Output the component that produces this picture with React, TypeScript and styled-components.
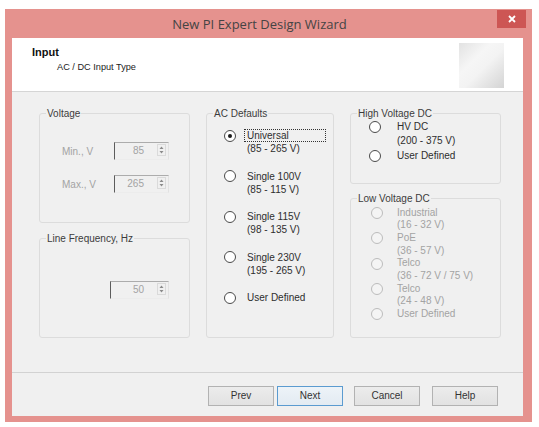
import React from "react";
import styled, { createGlobalStyle } from "styled-components";

const GlobalStyle = createGlobalStyle`
  html, body {
    margin: 0;
    padding: 0;
    background: #ffffff;
  }
  body {
    font-family: "Liberation Sans", Arial, sans-serif;
  }
`;

const Page = styled.div`
  width: 539px;
  height: 427px;
  padding: 9px 0 0 5px;
  box-sizing: border-box;
`;

const Window = styled.div`
  width: 527px;
  height: 413px;
  box-sizing: border-box;
  background: #e5928e;
  padding: 0 9px 6px 7px;
  display: flex;
  flex-direction: column;
`;

const TitleBar = styled.div`
  height: 29px;
  display: flex;
  align-items: flex-start;
  flex-shrink: 0;
`;

const Title = styled.div`
  flex: 1;
  padding-left: 10px;
  text-align: center;
  font-family: "Open Sans", "Noto Sans", sans-serif;
  font-size: 13px;
  line-height: 30px;
  color: #444;
`;

const CloseButton = styled.div`
  width: 29px;
  height: 18px;
  margin: 1px -3px 0 0;
  background: #cd5654;
  display: flex;
  align-items: center;
  justify-content: center;
`;

const Client = styled.div`
  flex: 1;
  background: #f0f0f0;
  display: flex;
  flex-direction: column;
`;

const Header = styled.div`
  height: 53px;
  background: #ffffff;
  border-bottom: 1px solid #d5d5d5;
  display: flex;
  justify-content: space-between;
  padding: 0 19px 0 20px;
  flex-shrink: 0;
`;

const HeaderText = styled.div`
  padding-top: 8px;
`;

const HeaderTitle = styled.div`
  font-weight: bold;
  font-size: 11px;
  line-height: 13px;
  color: #111;
`;

const HeaderSub = styled.div`
  font-size: 9.2px;
  line-height: 13px;
  margin-top: 2px;
  padding-left: 25px;
  color: #222;
`;

const HeaderIcon = styled.div`
  width: 45px;
  height: 45px;
  margin-top: 5px;
  background: linear-gradient(135deg, #e2e2e2 0%, #f6f6f6 35%, #f3f3f3 55%, #d4d4d4 100%);
`;

const Body = styled.div`
  height: 280px;
  box-sizing: border-box;
  padding: 21px 0 0 27px;
  display: flex;
  gap: 16px;
  flex-shrink: 0;
`;

const Column = styled.div<{ $width: number; $gap: number }>`
  width: ${(p) => p.$width}px;
  display: flex;
  flex-direction: column;
  gap: ${(p) => p.$gap}px;
`;

const Group = styled.div<{ $height: number }>`
  height: ${(p) => p.$height}px;
  box-sizing: border-box;
  border: 1px solid #dcdcdc;
  border-radius: 3px;
`;

const Caption = styled.div`
  width: fit-content;
  margin: -7px 0 0 6px;
  padding: 0 1px;
  background: #f0f0f0;
  font-size: 10px;
  line-height: 13px;
  color: #3c3c3c;
`;

const FieldGrid = styled.div`
  margin-top: 22px;
  padding-left: 22px;
  display: grid;
  grid-template-columns: 52px 55px;
  grid-auto-rows: 18px;
  row-gap: 15px;
  align-items: center;
`;

const FieldLabel = styled.div`
  font-size: 10px;
  color: #a3a3a3;
`;

const SpinBox = styled.div<{ $width?: number; $offset?: number; $top?: number }>`
  width: ${(p) => p.$width ?? 55}px;
  height: 18px;
  box-sizing: border-box;
  margin-left: ${(p) => p.$offset ?? 0}px;
  margin-top: ${(p) => p.$top ?? 0}px;
  display: flex;
  background: #f0f0f0;
  border-top: 1px solid #acacac;
  border-left: 1px solid #5c5c5c;
  border-right: 1px solid #e2e2e2;
  border-bottom: 1px solid #ececec;
`;

const SpinValue = styled.div`
  flex: 1;
  text-align: right;
  font-size: 10px;
  line-height: 16px;
  color: #a3a3a3;
`;

const SpinArrows = styled.div`
  width: 9px;
  height: 12px;
  box-sizing: border-box;
  margin: 1px 2px 0 13px;
  border: 1px solid #dadada;
  display: flex;
  align-items: center;
  justify-content: center;
`;

const RadioList = styled.div<{ $top: number; $left: number; $gap: number }>`
  margin-top: ${(p) => p.$top}px;
  padding-left: ${(p) => p.$left}px;
  display: flex;
  flex-direction: column;
  gap: ${(p) => p.$gap}px;
`;

const RadioItem = styled.div<{ $gap: number; $line: number; $dim?: boolean }>`
  display: flex;
  align-items: flex-start;
  gap: ${(p) => p.$gap}px;
  font-size: 10px;
  line-height: ${(p) => p.$line}px;
  color: ${(p) => (p.$dim ? "#a3a3a3" : "#2e2e2e")};
`;

const RadioCircle = styled.span<{ $checked?: boolean; $dim?: boolean; $line: number }>`
  flex-shrink: 0;
  width: 12px;
  height: 12px;
  box-sizing: border-box;
  margin-top: ${(p) => (p.$line - 12) / 2}px;
  border-radius: 50%;
  border: 1px solid ${(p) => (p.$dim ? "#bcbcbc" : "#4a4a4a")};
  background: ${(p) => (p.$dim ? "#f4f4f4" : "#ffffff")};
  display: flex;
  align-items: center;
  justify-content: center;

  &::after {
    content: "";
    display: ${(p) => (p.$checked ? "block" : "none")};
    width: 4px;
    height: 4px;
    border-radius: 50%;
    background: #1a1a1a;
  }
`;

const Focused = styled.span`
  display: block;
  width: 82px;
  height: 13px;
  box-sizing: border-box;
  margin-left: -3px;
  padding-left: 2px;
  border: 1px dotted #333;
  line-height: 11px;
`;

const Footer = styled.div`
  flex: 1;
  border-top: 1px solid #d2d2d2;
  display: flex;
  justify-content: flex-end;
  align-items: flex-start;
  padding: 13px 25px 0 0;
`;

const Button = styled.div<{ $primary?: boolean; $space: number }>`
  width: 66px;
  height: 20px;
  box-sizing: border-box;
  margin-left: ${(p) => p.$space}px;
  border: 1px solid ${(p) => (p.$primary ? "#5b9bd0" : "#b2b2b2")};
  background: ${(p) =>
    p.$primary ? "linear-gradient(#edf3f8, #e3ebf2)" : "linear-gradient(#ececec, #e2e2e2)"};
  font-size: 10px;
  line-height: 18px;
  text-align: center;
  color: #333;
`;

type Option = { label: string; range?: string; checked?: boolean };

const acOptions: Option[] = [
  { label: "Universal", range: "(85 - 265 V)", checked: true },
  { label: "Single 100V", range: "(85 - 115 V)" },
  { label: "Single 115V", range: "(98 - 135 V)" },
  { label: "Single 230V", range: "(195 - 265 V)" },
  { label: "User Defined" },
];

const hvOptions: Option[] = [
  { label: "HV DC", range: "(200 - 375 V)" },
  { label: "User Defined" },
];

const lvOptions: Option[] = [
  { label: "Industrial", range: "(16 - 32 V)" },
  { label: "PoE", range: "(36 - 57 V)" },
  { label: "Telco", range: "(36 - 72 V / 75 V)" },
  { label: "Telco", range: "(24 - 48 V)" },
  { label: "User Defined" },
];

const Arrows = () => (
  <svg width="5" height="8" viewBox="0 0 5 8">
    <path d="M2.5 0.5 L4.5 3 L0.5 3 Z" fill="#8a8a8a" />
    <path d="M0.5 5 L4.5 5 L2.5 7.5 Z" fill="#8a8a8a" />
  </svg>
);

const Spin = ({ value, width, offset, top }: { value: string; width?: number; offset?: number; top?: number }) => (
  <SpinBox $width={width} $offset={offset} $top={top}>
    <SpinValue>{value}</SpinValue>
    <SpinArrows>
      <Arrows />
    </SpinArrows>
  </SpinBox>
);

const Radios = ({
  options,
  top,
  left,
  gap,
  textGap,
  line,
  dim,
  focusFirst,
}: {
  options: Option[];
  top: number;
  left: number;
  gap: number;
  textGap: number;
  line: number;
  dim?: boolean;
  focusFirst?: boolean;
}) => (
  <RadioList $top={top} $left={left} $gap={gap}>
    {options.map((o, i) => (
      <RadioItem key={i} $gap={textGap} $line={line} $dim={dim}>
        <RadioCircle $checked={o.checked} $dim={dim} $line={line} />
        <div>
          {focusFirst && i === 0 ? <Focused>{o.label}</Focused> : <div>{o.label}</div>}
          {o.range && <div>{o.range}</div>}
        </div>
      </RadioItem>
    ))}
  </RadioList>
);

export default function App() {
  return (
    <>
      <GlobalStyle />
      <Page>
        <Window>
          <TitleBar>
            <Title>New PI Expert Design Wizard</Title>
            <CloseButton>
              <svg width="8" height="8" viewBox="0 0 8 8">
                <path d="M1 1 L7 7 M7 1 L1 7" stroke="#fff" strokeWidth="1.8" />
              </svg>
            </CloseButton>
          </TitleBar>
          <Client>
            <Header>
              <HeaderText>
                <HeaderTitle>Input</HeaderTitle>
                <HeaderSub>AC / DC Input Type</HeaderSub>
              </HeaderText>
              <HeaderIcon />
            </Header>
            <Body>
              <Column $width={151} $gap={15}>
                <Group $height={110}>
                  <Caption>Voltage</Caption>
                  <FieldGrid>
                    <FieldLabel>Min., V</FieldLabel>
                    <Spin value="85" />
                    <FieldLabel>Max., V</FieldLabel>
                    <Spin value="265" />
                  </FieldGrid>
                </Group>
                <Group $height={100}>
                  <Caption>Line Frequency, Hz</Caption>
                  <Spin value="50" width={59} offset={70} top={36} />
                </Group>
              </Column>
              <Column $width={128} $gap={0}>
                <Group $height={225}>
                  <Caption>AC Defaults</Caption>
                  <Radios options={acOptions} top={9} left={17} gap={14.5} textGap={11} line={13} focusFirst />
                </Group>
              </Column>
              <Column $width={151} $gap={14}>
                <Group $height={71}>
                  <Caption>High Voltage DC</Caption>
                  <Radios options={hvOptions} top={0} left={18} gap={1} textGap={16} line={14} />
                </Group>
                <Group $height={140}>
                  <Caption>Low Voltage DC</Caption>
                  <Radios options={lvOptions} top={1.7} left={20} gap={0} textGap={14} line={12.65} dim />
                </Group>
              </Column>
            </Body>
            <Footer>
              <Button $space={0}>Prev</Button>
              <Button $space={3} $primary>
                Next
              </Button>
              <Button $space={11}>Cancel</Button>
              <Button $space={12}>Help</Button>
            </Footer>
          </Client>
        </Window>
      </Page>
    </>
  );
}
